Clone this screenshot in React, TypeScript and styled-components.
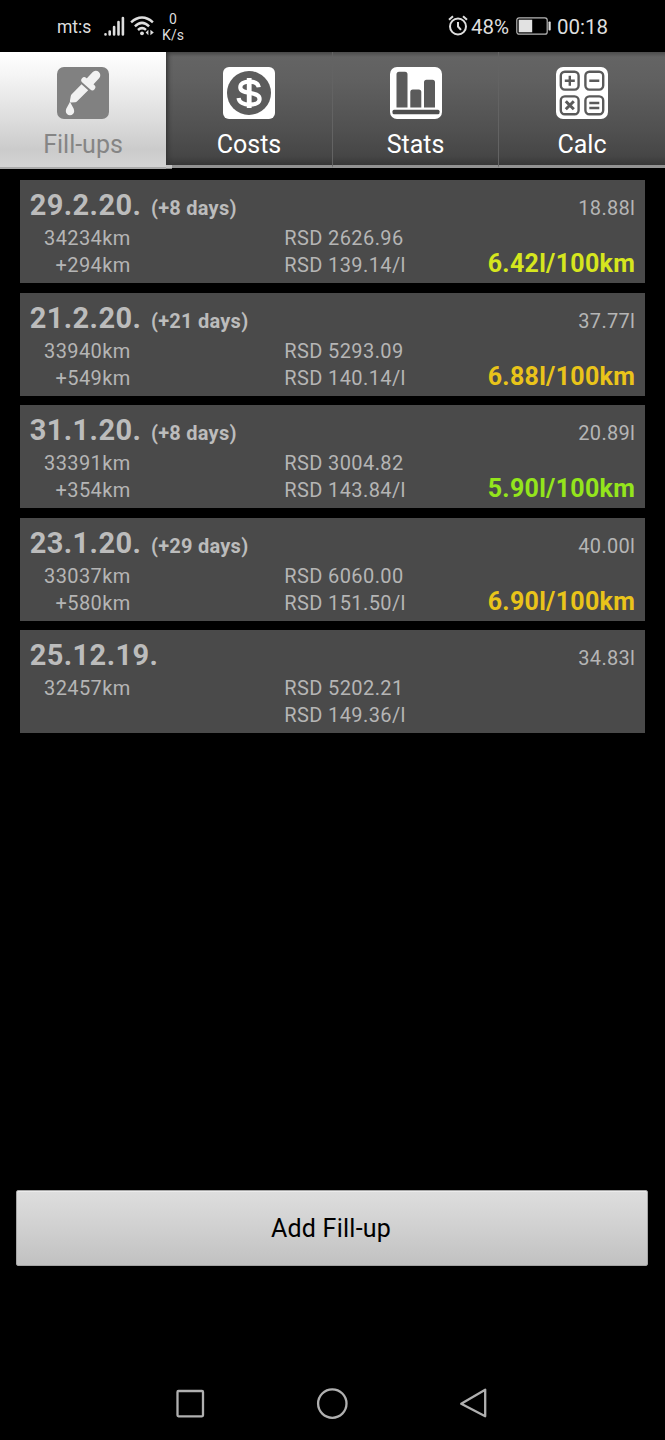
import React from "react";
import styled, { createGlobalStyle } from "styled-components";

const GlobalStyle = createGlobalStyle`
  * { box-sizing: border-box; }
  body { margin: 0; background: #000; font-family: Roboto, "Liberation Sans", sans-serif; }
`;

const Screen = styled.div`
  width: 665px;
  height: 1440px;
  background: #000;
  display: flex;
  flex-direction: column;
  overflow: hidden;
`;

const StatusBar = styled.header`
  height: 52px;
  flex: none;
  display: flex;
  justify-content: space-between;
  padding: 0 57px;
  color: #dedede;
`;

const StatusGroup = styled.div`
  display: flex;
  align-items: center;
  height: 52px;
  svg { flex: none; display: block; }
`;

const Carrier = styled.span`
  font-size: 17.5px;
  line-height: 22px;
  width: 46px;
  padding-top: 2px;
`;

const Speed = styled.div`
  width: 24px;
  margin-left: 6px;
  font-size: 14px;
  line-height: 16px;
  text-align: center;
  white-space: nowrap;
  padding-top: 1px;
`;

const StatusText = styled.span<{ $width: number }>`
  width: ${(p) => p.$width}px;
  font-size: 20.5px;
  line-height: 24px;
  padding-top: 1px;
  white-space: nowrap;
`;

const TabBar = styled.nav`
  height: 117px;
  flex: none;
  display: grid;
  grid-template-columns: 166px 167px 166px 166px;
`;

const Tab = styled.button<{ $active?: boolean }>`
  position: relative;
  z-index: ${(p) => (p.$active ? 1 : 0)};
  height: ${(p) => (p.$active ? 117 : 116)}px;
  border: 0;
  border-bottom: ${(p) => (p.$active ? "2px solid #aaa" : "3px solid #929292")};
  border-right: ${(p) => (p.$active ? "0" : "1px solid #636363")};
  padding: 15px 0 0;
  display: flex;
  flex-direction: column;
  align-items: center;
  font-family: inherit;
  font-size: 25px;
  line-height: 30px;
  color: ${(p) => (p.$active ? "#858585" : "#fff")};
  background: ${(p) =>
    p.$active
      ? "linear-gradient(#fff 0%, #f5f5f5 20%, #dcdcdc 60%, #cbcbcb 85%, #d4d4d4 100%)"
      : "linear-gradient(#4c4c4c 0, #646464 5px, #606060 25%, #505050 70%, #464646 92%, #383838 100%)"};
  &:nth-child(2) { box-shadow: inset 4px 0 4px -2px #333; }
  &:last-child { border-right: 0; }
  svg { display: block; flex: none; margin-bottom: 10.5px; }
`;

const TabLip = styled.span`
  position: absolute;
  left: 166px;
  bottom: -2px;
  width: 6px;
  height: 4px;
  background: #c4c4c4;
  border-bottom: 1px solid #8a8a8a;
`;

const List = styled.main`
  height: 1021px;
  flex: none;
  padding: 11px 20.5px 0 20px;
  display: flex;
  flex-direction: column;
  gap: 9.6px;
`;

const Card = styled.article`
  height: 103px;
  flex: none;
  padding: 10px 9.3px 0 9.7px;
  background: #4a4a4a;
  color: #b5b5b5;
`;

const CardHead = styled.div`
  height: 35px;
  display: flex;
  align-items: baseline;
  line-height: 30px;
`;

const FillDate = styled.span`
  font-size: 29px;
  font-weight: 700;
  letter-spacing: 0.4px;
  color: #bcbcbc;
`;

const Days = styled.span`
  font-size: 20px;
  font-weight: 700;
  letter-spacing: 0.25px;
  margin-left: 9.6px;
  color: #bcbcbc;
`;

const Volume = styled.span`
  margin-left: auto;
  font-size: 20px;
  letter-spacing: 0.3px;
`;

const CardBody = styled.div`
  display: grid;
  grid-template-columns: 101px 154.5px 1fr;
  font-size: 20px;
  line-height: 27px;
  letter-spacing: 0.4px;
`;

const Odometer = styled.div`
  text-align: right;
`;

const Price = styled.div`
  padding-left: 153.5px;
  white-space: nowrap;
`;

const Consumption = styled.div<{ $color: string }>`
  color: ${(p) => p.$color};
  font-size: 25px;
  font-weight: 700;
  letter-spacing: 0.3px;
  text-align: right;
  padding-top: 25px;
  white-space: nowrap;
`;

const Footer = styled.footer`
  height: 178px;
  flex: none;
  padding: 0 17px 0 16px;
`;

const AddButton = styled.button`
  width: 100%;
  height: 76px;
  border: 1px solid #a5a5a5;
  border-radius: 2px;
  background: linear-gradient(#dedede, #d0d0d0 50%, #c1c1c1);
  box-shadow: inset 0 1px #ececec;
  font-family: inherit;
  font-size: 25px;
  letter-spacing: 0.25px;
  color: #000;
  padding: 1px 2px 0 0;
`;

const NavBar = styled.nav`
  height: 72px;
  display: flex;
  justify-content: center;
  svg { display: block; }
`;

const SignalIcon = () => (
  <svg width="22" height="22" viewBox="0 0 22 22" stroke="#dedede" strokeWidth="2.6" strokeLinecap="round">
    <path d="M2.5 19.2v.2M6.7 16.5v2.9M11.1 12v7.4M15.5 7v12.4M19.9 3v16.4" />
  </svg>
);

const WifiIcon = () => (
  <svg width="30" height="22" viewBox="-5 0 30 22" fill="none" stroke="#dedede" strokeWidth="2.5">
    <path d="M1.1 7.3C8 1 16 1 22.9 7.3M4.9 11.3c4.5-4.3 9.7-4.3 14.2 0M8 15c2.5-2.3 5.5-2.3 8-.1" />
    <circle cx="12" cy="18.3" r="1.9" fill="#dedede" stroke="none" />
    <path d="M18.4 14.8v5.4l-2.8-2.7zM20.4 14.8v5.4l3.4-2.7z" fill="#dedede" stroke="none" />
  </svg>
);

const AlarmIcon = () => (
  <svg width="23" height="22" viewBox="0 0 23 22" fill="none" stroke="#dedede" strokeWidth="2">
    <circle cx="10" cy="11.5" r="8" />
    <path d="M1 4.7 5 1.2M15 1.2l4 3.5M10 7v4.5l3 3.3" />
  </svg>
);

const BatteryIcon = () => (
  <svg width="41" height="18" viewBox="0 0 41 18" fill="none">
    <rect x=".8" y=".8" width="30.4" height="16.4" rx="2.3" stroke="#b5b5b5" strokeWidth="1.2" />
    <rect x="2.7" y="2.7" width="13.5" height="12.6" fill="#e2e2e2" />
    <rect x="32.5" y="4.5" width="2.2" height="9" rx=".8" fill="#dedede" />
  </svg>
);

const DropperIcon = () => (
  <svg width="52" height="52" viewBox="0 0 52 52" fill="none" stroke="#f1f1f1" strokeLinecap="round">
    <rect width="52" height="52" rx="7" fill="#818181" stroke="none" />
    <path d="M38.8 8.2 33 14.5" strokeWidth="9" />
    <path d="m27.3 13.2 8 7" strokeWidth="6" />
    <g fill="#f1f1f1" stroke="none">
      <path d="m24.5 17.2 6.7 6-11.3 11.2q-.7.7-1.7.8l-4 .3q-1.6 0-1.3-1.6l.9-4.8q.2-1 .9-1.8z" />
      <path d="M13 34.8c1.5 3.7 4.2 6.3 4.2 9.2 0 2.5-1.8 4.2-4.2 4.2S8.8 46.5 8.8 44c0-2.9 2.7-5.5 4.2-9.2z" />
    </g>
  </svg>
);

const DollarIcon = () => (
  <svg width="52" height="52" viewBox="0 0 52 52" fill="none">
    <rect width="52" height="52" rx="6" fill="#fff" />
    <circle cx="26" cy="26" r="22" fill="#5c5c5c" />
    <path d="M35.8 20.3c-.5-3.8-4.2-5.7-9.5-5.7-5.3 0-9 2-9 5.6 0 4.1 4.2 4.7 9 5.6 5.6 1 10.3 2 10.3 6.2 0 3.7-4.2 5.7-10 5.7S16 35.4 15.6 31" stroke="#fff" strokeWidth="4.2" />
    <path d="M26.2 11v30" stroke="#fff" strokeWidth="4.8" />
  </svg>
);

const ChartIcon = () => (
  <svg width="52" height="52" viewBox="0 0 52 52">
    <rect width="52" height="52" rx="7" fill="#fff" />
    <path d="M6.5 40.5V7.2q0-2.5 2.5-2.5h6q2.5 0 2.5 2.5v33.3zM20.3 40.5V25q0-2.5 2.5-2.5h6q2.5 0 2.5 2.5v15.5zM34 40.5V15.3q0-2.5 2.5-2.5h6q2.5 0 2.5 2.5v25.2z" fill="#5b5b5b" />
    <rect x="2.5" y="42.7" width="47" height="4.6" rx="1.5" fill="#4e4e4e" />
  </svg>
);

const CalcIcon = () => (
  <svg width="52" height="52" viewBox="0 0 52 52" fill="none" stroke="#5a5a5a" strokeWidth="2.4">
    <rect width="52" height="52" rx="7" fill="#fff" stroke="none" />
    <rect x="4.8" y="4.8" width="17.8" height="17.8" rx="4" />
    <rect x="29.4" y="4.8" width="17.8" height="17.8" rx="4" />
    <rect x="4.8" y="29.4" width="17.8" height="17.8" rx="4" />
    <rect x="29.4" y="29.4" width="17.8" height="17.8" rx="4" />
    <path d="M8.8 13.7h10M13.8 8.7v10M33.3 13.7h10M33.3 36h10M33.3 41h10" />
    <path d="m9.8 34.2 8 8M17.8 34.2l-8 8" strokeWidth="3" />
  </svg>
);

const NavIcons = () => (
  <svg width="665" height="72" viewBox="0 0 665 72" fill="none" stroke="#b0b0b0" strokeWidth="2.3" strokeLinejoin="round">
    <rect x="177.5" y="23" width="25.5" height="25.3" rx="1" />
    <circle cx="332.3" cy="35.6" r="14.2" />
    <path d="M461.2 35.5 485.2 21.4v26.6z" transform="translate(0 .3)" />
  </svg>
);

const entries = [
  { date: "29.2.20.", days: "(+8 days)", volume: "18.88l", odo: "34234km", trip: "+294km", cost: "RSD 2626.96", unit: "RSD 139.14/l", rate: "6.42l/100km", color: "#d6e61e" },
  { date: "21.2.20.", days: "(+21 days)", volume: "37.77l", odo: "33940km", trip: "+549km", cost: "RSD 5293.09", unit: "RSD 140.14/l", rate: "6.88l/100km", color: "#e9c41a" },
  { date: "31.1.20.", days: "(+8 days)", volume: "20.89l", odo: "33391km", trip: "+354km", cost: "RSD 3004.82", unit: "RSD 143.84/l", rate: "5.90l/100km", color: "#94e51c" },
  { date: "23.1.20.", days: "(+29 days)", volume: "40.00l", odo: "33037km", trip: "+580km", cost: "RSD 6060.00", unit: "RSD 151.50/l", rate: "6.90l/100km", color: "#e9c41a" },
  { date: "25.12.19.", volume: "34.83l", odo: "32457km", cost: "RSD 5202.21", unit: "RSD 149.36/l" },
];

export default function App() {
  return (
    <Screen>
      <GlobalStyle />
      <StatusBar>
        <StatusGroup>
          <Carrier>mt:s</Carrier>
          <SignalIcon />
          <WifiIcon />
          <Speed>0<br />K/s</Speed>
        </StatusGroup>
        <StatusGroup>
          <AlarmIcon />
          <StatusText $width={45}>48%</StatusText>
          <BatteryIcon />
          <StatusText $width={51}>00:18</StatusText>
        </StatusGroup>
      </StatusBar>
      <TabBar>
        <Tab $active><DropperIcon />Fill-ups<TabLip /></Tab>
        <Tab><DollarIcon />Costs</Tab>
        <Tab><ChartIcon />Stats</Tab>
        <Tab><CalcIcon />Calc</Tab>
      </TabBar>
      <List>
        {entries.map((e) => (
          <Card key={e.date}>
            <CardHead>
              <FillDate>{e.date}</FillDate>
              {e.days && <Days>{e.days}</Days>}
              <Volume>{e.volume}</Volume>
            </CardHead>
            <CardBody>
              <Odometer>{e.odo}<br />{e.trip}</Odometer>
              <Price>{e.cost}<br />{e.unit}</Price>
              {e.rate && <Consumption $color={e.color!}>{e.rate}</Consumption>}
            </CardBody>
          </Card>
        ))}
      </List>
      <Footer>
        <AddButton>Add Fill-up</AddButton>
      </Footer>
      <NavBar><NavIcons /></NavBar>
    </Screen>
  );
}
